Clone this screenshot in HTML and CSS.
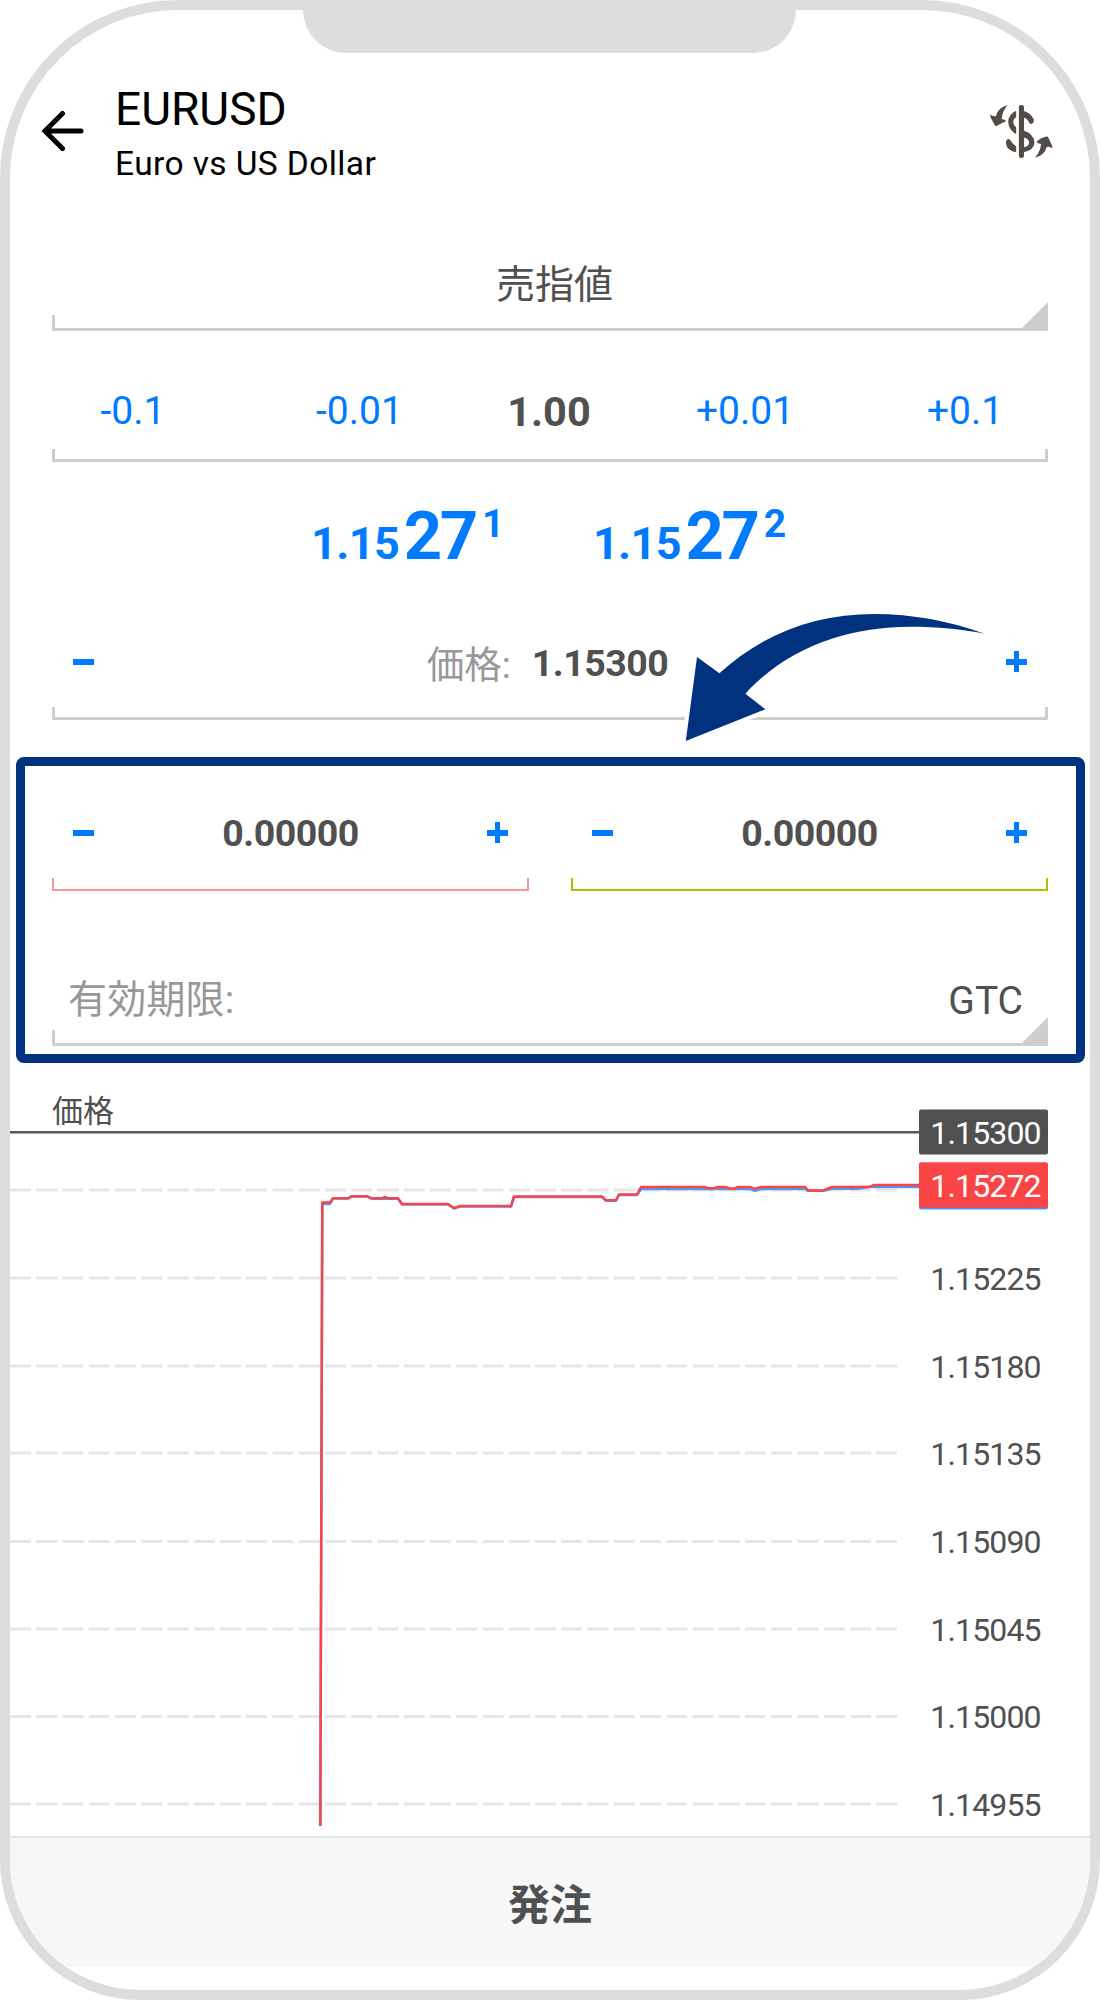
FILE: index.html
```html
<!DOCTYPE html>
<html lang="ja">
<head>
<meta charset="utf-8">
<title>EURUSD</title>
<link rel="stylesheet" href="styles.css">
</head>
<body>
<div class="phone">
  <div class="notch"></div>
  <header class="header">
    <svg class="back" viewBox="0 0 44 42" width="44" height="42"><path d="M40 21H5M21.500 3.500L4 21L21.500 38.500" fill="none" stroke="#000" stroke-width="5" stroke-linecap="round"/></svg>
    <div class="titles">
      <h1 class="symbol">EURUSD</h1>
      <p class="desc">Euro vs US Dollar</p>
    </div>
    <svg class="swap" viewBox="90 74 190 160" width="63" height="53">
      <g fill="#544a47">
        <rect x="177" y="74" width="15.500" height="160" rx="7"/>
        <path d="M143 75Q114 82 108 107Q99 110 91 103Q90 108 93 114L105 136Q107 139 111 137Q124 129 138 123Q139 119 125 116Q127 93 143 75Z"/>
        <path d="M226 233Q255 226 261 201Q270 198 278 205Q279 200 276 194L266 172Q264 168 257 170Q242 173 231 184Q230 189 244 192Q242 215 226 233Z"/>
        <path d="M169 91Q145 101 145 126Q146 149 169 162V141Q160 135 160 126Q160 116 169 111Z"/>
        <path d="M190 91Q212 96 222 117Q224 129 214 131Q208 131 206 123Q202 114 190 111Z"/>
        <path d="M190 150Q224 162 224 188Q223 211 190 217V202Q208 199 208 187Q207 174 190 172Z"/>
        <path d="M138 190Q137 179 145 177Q150 177 154 184Q160 194 169 199V217Q141 211 138 190Z"/>
      </g>
    </svg>
  </header>

  <section class="field type">
    <div class="value">売指値</div>
    <div class="rule tall select"></div>
  </section>

  <section class="field volume">
    <div class="steps">
      <span class="step">-0.1</span>
      <span class="step">-0.01</span>
      <strong class="lots">1.00</strong>
      <span class="step">+0.01</span>
      <span class="step">+0.1</span>
    </div>
    <div class="rule"></div>
  </section>

  <section class="quotes">
    <div class="quote"><span class="base">1.15</span><span class="pips">27</span><span class="frac">1</span></div>
    <div class="quote"><span class="base">1.15</span><span class="pips">27</span><span class="frac">2</span></div>
  </section>

  <section class="field price">
    <div class="stepper">
      <i class="minus"></i>
      <div class="amount"><span class="label">価格:</span><b>1.15300</b></div>
      <i class="plus"></i>
    </div>
    <div class="rule"></div>
    <svg class="pointer" viewBox="670 600 330 150" width="330" height="150">
      <path d="M984.500 633.700C950 621 912 614 874.500 614C815 614 762 634 719.400 673.300L697 657L685.800 741L765.400 709.300L745.400 693.700C788 647 848 626.700 911 626.700C937 626.700 962 629 984.500 633.700Z" fill="#00327f" stroke="#fff" stroke-width="8" paint-order="stroke"/>
    </svg>
  </section>

  <section class="highlight">
    <div class="stops">
      <div class="stop">
        <div class="stepper"><i class="minus"></i><b>0.00000</b><i class="plus"></i></div>
        <div class="rule thin loss"></div>
      </div>
      <div class="stop">
        <div class="stepper"><i class="minus"></i><b>0.00000</b><i class="plus"></i></div>
        <div class="rule thin profit"></div>
      </div>
    </div>
    <div class="expiry">
      <span class="label">有効期限:</span>
      <span class="mode">GTC</span>
    </div>
    <div class="rule tall select"></div>
  </section>

  <svg class="chart" viewBox="10 1063 1080 773" width="1080" height="773">
    <g class="grid">
      <path d="M10 1190H897M10 1278H897M10 1366H897M10 1453H897M10 1541.500H897M10 1629H897M10 1716.500H897M10 1804H897"/>
    </g>
    <path class="order" d="M10 1132.300H920"/>
    <path class="bid" d="M320.300 1826L322.300 1204H330L333 1198.600H348L352 1196.500H367L372 1198.800H398L402 1204.500H448L454 1208.500L460 1206.500H511L514 1197H602L606 1200.800H616L619 1195H637L641 1189H750L755 1190.800L761 1189H805L808 1190.800H823L832 1188.700H858L870 1187L874 1187H920"/>
    <path class="ask" d="M320.300 1826L322.300 1202.500H330L333 1198.300H348L352 1196.200H367L372 1198.300H382L385 1196.800L388 1198.300H398L402 1204H448L454 1208L460 1206H511L514 1196.500H602L606 1200.300H616L619 1194.500H637L641 1186.900H705L708 1188.300H714L717 1186.900H726L729 1188.400H735L738 1186.900H750L755 1188.800L761 1186.900H805L808 1190.500H823L832 1187H858L870 1186.800L874 1185H920"/>
    <rect x="919" y="1109.500" width="129" height="45" rx="2" fill="#505050"/>
    <rect x="919" y="1170" width="129" height="39.500" rx="2" fill="#4a9bff"/>
    <rect x="919" y="1162.300" width="129" height="45.500" rx="2" fill="#fb4446"/>
    <text class="caption" x="52" y="1122">価格</text>
    <g class="axis">
      <text class="on" x="1040.700" y="1143.500">1.15300</text>
      <text class="on" x="1040.700" y="1196.500">1.15272</text>
      <text x="1040.700" y="1289.500">1.15225</text>
      <text x="1040.700" y="1377.500">1.15180</text>
      <text x="1040.700" y="1464.500">1.15135</text>
      <text x="1040.700" y="1552.500">1.15090</text>
      <text x="1040.700" y="1640.500">1.15045</text>
      <text x="1040.700" y="1727.500">1.15000</text>
      <text x="1040.700" y="1815.500">1.14955</text>
    </g>
  </svg>

  <footer class="submit">発注</footer>
</div>
</body>
</html>
```
FILE: styles.css
```css
* { box-sizing: border-box; }

body {
  margin: 0;
  background: #fff;
  color: #505050;
  font-family: Roboto, "Noto Sans CJK JP", sans-serif;
}

.phone {
  position: relative;
  display: flex;
  flex-direction: column;
  width: 1100px;
  height: 2000px;
  border: 10px solid #ddd;
  border-radius: 178px 178px 140px 140px;
  overflow: hidden;
}

.notch {
  position: absolute;
  top: 0;
  left: 293px;
  width: 493px;
  height: 43px;
  background: #ddd;
  border-radius: 0 0 43px 43px;
}

.header {
  display: flex;
  height: 243px;
  padding: 74px 37px 0 31px;
  color: #000;
}
.back { margin-top: 26.300px; }
.titles { flex: 1; margin-left: 30px; }
.symbol { margin: 0; font-size: 46px; font-weight: 400; line-height: 51px; }
.desc { margin: 10px 0 0; font-size: 33.500px; line-height: 38px; letter-spacing: 0.4px; }
.swap { margin-top: 21px; }

.field { position: relative; margin: 0 42px; }

/* bracket-shaped underline shared by all inputs */
.rule {
  position: relative;
  height: 13px;
  border: solid #cdcdcd;
  border-width: 0 3px 3px;
}
.rule.tall { height: 16px; }
.rule.thin { border-width: 0 2px 2px; }
.rule.loss { border-color: #ff9494; }
.rule.profit { border-color: #99cc00; }
.rule.select::after {
  content: "";
  position: absolute;
  right: -3px;
  bottom: -3px;
  width: 29px;
  height: 29px;
  background: #cdcdcd;
  clip-path: polygon(100% 0, 100% 100%, 0 100%);
}

.type .value {
  height: 62px;
  padding-left: 9px;
  font-size: 39px;
  line-height: 64px;
  text-align: center;
}

.volume { margin-top: 42px; }
.steps {
  display: grid;
  grid-template-columns: 162px 291px 88px 304px 136px;
  height: 76px;
  line-height: 77px;
  text-align: center;
}
.step { color: #007aff; font-size: 39px; }
.lots { font-size: 41.500px; justify-self: center; }

.quotes {
  display: flex;
  gap: 88.500px;
  height: 156px;
  padding: 40.600px 0 0 301px;
  color: #007aff;
}
.quote {
  display: flex;
  align-items: baseline;
  height: 67px;
  font-weight: 700;
}
.base { font-size: 45px; line-height: 45px; letter-spacing: -0.6px; }
.pips { margin-left: 4.600px; font-size: 67px; line-height: 67px; letter-spacing: -2.4px; }
.frac { align-self: flex-start; margin-left: 6.200px; font-size: 39px; line-height: 42px; }

.stepper {
  display: flex;
  align-items: center;
  justify-content: space-between;
  height: 89px;
  padding: 0 21px 2px;
  font-size: 37.500px;
}
.stepper b { letter-spacing: -0.5px; }
.minus, .plus {
  width: 21px;
  height: 21px;
  background: linear-gradient(#007aff, #007aff) center / 21px 6px no-repeat;
}
.plus {
  background:
    linear-gradient(#007aff, #007aff) center / 21px 6px no-repeat,
    linear-gradient(#007aff, #007aff) center / 5px 21px no-repeat;
}
.label { color: #98989b; }
.amount { display: flex; align-items: flex-start; height: 44px; padding-right: 5px; }
.amount .label { margin-right: 21px; line-height: 51px; }
.amount b { line-height: 47px; }

.pointer {
  position: absolute;
  left: 618px;
  top: -18px;
}

.highlight {
  height: 306px;
  margin: 37px 5.500px 0;
  padding: 23px 27.500px 0;
  border: 9px solid #00327f;
  border-radius: 8px;
}
.stops { display: flex; gap: 42px; }
.stop { flex: 1; }
.expiry {
  display: flex;
  justify-content: space-between;
  height: 60px;
  margin-top: 79px;
  padding: 0 25px 0 16px;
  font-size: 39px;
  line-height: 60px;
}
.expiry .label { letter-spacing: 0.2px; }
.mode { line-height: 62px; }

.chart { display: block; flex: none; }
.grid { fill: none; stroke: #e6e6e6; stroke-width: 3; stroke-dasharray: 21 5.250; }
.order { stroke: #585858; stroke-width: 2.500; }
.ask, .bid { fill: none; stroke-width: 2.500; stroke-linejoin: round; }
.ask { stroke: #fb4446; }
.bid { stroke: #4a9bff; }
.caption { font-size: 31px; fill: #505050; }
.axis { font-size: 32px; letter-spacing: -0.85px; fill: #505050; text-anchor: end; }
.axis .on { fill: #fff; }

.submit {
  height: 131px;
  border-top: 2px solid #e4e4e4;
  background: #f7f7f7;
  font-size: 42px;
  font-weight: 700;
  line-height: 135px;
  text-align: center;
}
```
